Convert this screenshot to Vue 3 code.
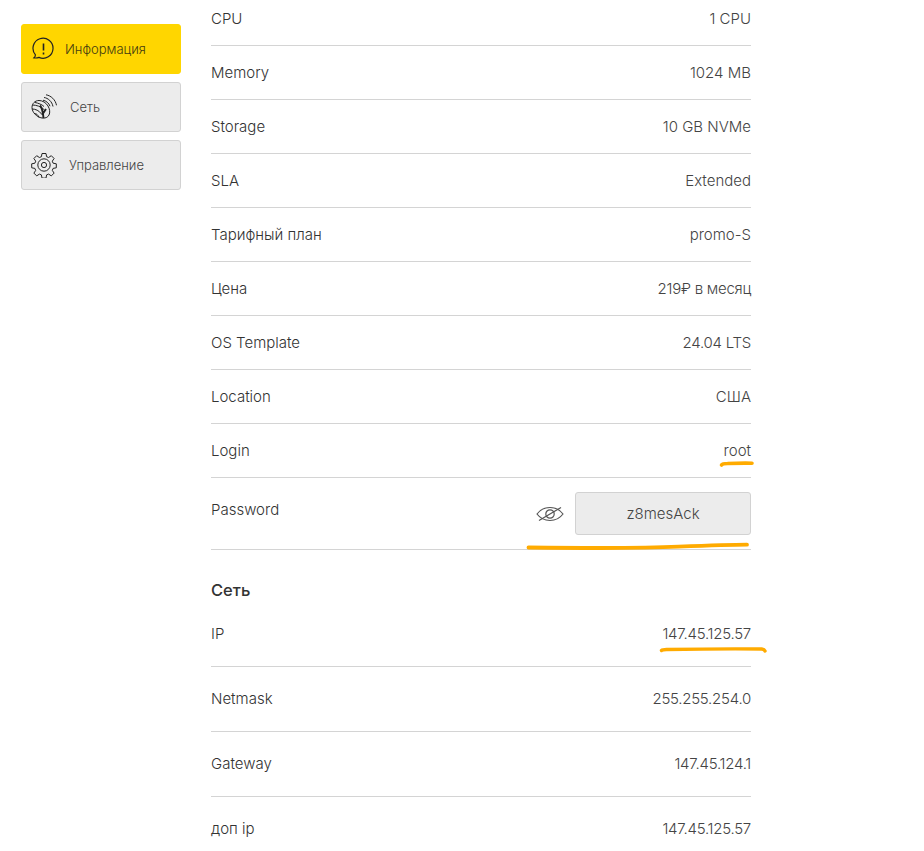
<script setup>
const specs = [
  ['CPU', '1 CPU', ''],
  ['Memory', '1024 MB', ''],
  ['Storage', '10 GB NVMe', ''],
  ['SLA', 'Extended', ''],
  ['Тарифный план', 'promo-S', ''],
  ['Цена', '219₽ в месяц', 'num'],
  ['OS Template', '24.04 LTS', 'num'],
  ['Location', 'США', ''],
  ['Login', 'root', ''],
]
const network = [
  ['IP', '147.45.125.57'],
  ['Netmask', '255.255.254.0'],
  ['Gateway', '147.45.124.1'],
  ['доп ip', '147.45.125.57'],
]
</script>

<template>
  <div class="page">
    <aside class="side">
      <div class="tab active">
        <svg class="ico info" width="24" height="24" viewBox="0 0 24 24" fill="none" stroke="#222" stroke-width="1.2">
          <path d="M3 20.800c1-.9 1.500-2 1.300-3.200A10 10 0 1 1 8 20.400c-1.500.5-3.200.8-5 .4z" />
          <path d="M12.500 6.500v7M12.500 15.500v2" stroke-width="1.600" />
        </svg>
        <span class="t1">Информация</span>
      </div>
      <div class="tab">
        <svg class="ico net" width="26" height="26" viewBox="0 0 26 26" fill="none" stroke="#222" stroke-width="1">
          <path d="M1 13.500c0-4 3-7 7-7 3.500 0 7 2.200 9 5.500 1.800 3 2.300 6.500 1 9-1.200 2.500-4 3.500-7 3C6 23.200 1 18.500 1 13.500z" />
          <path d="M1.500 11c3.500 0 9 1.500 12 5M1 15c3.500 0 7 1.500 9.500 5M3 19.500c2.500 0 4 1.200 5 4M4 8.500c3 .5 7 2 9 4" />
          <path d="M9 11.500c2.500 2.500 3 7 3.500 12.500M15 15l-4 6" stroke-width="1.900" />
          <path d="M13 3.500c4 .5 8 4 9 9M15 .8c5 .8 9.500 5 10.500 10.500M12 6.200c3 .5 6 3 7 6" />
        </svg>
        <span class="t2">Сеть</span>
      </div>
      <div class="tab">
        <svg class="ico gear" width="26" height="26" viewBox="0 0 26 26" fill="none" stroke="#222" stroke-width="1">
          <path d="M11 1.500h4l.6 3.200 2 .8 2.700-1.800 2.800 2.800-1.800 2.700.8 2 3.200.6v4l-3.200.6-.8 2 1.800 2.700-2.800 2.800-2.700-1.800-2 .8-.6 3.200h-4l-.6-3.200-2-.8-2.700 1.800-2.800-2.800 1.800-2.700-.8-2-3.200-.6v-4l3.200-.6.8-2-1.800-2.700 2.800-2.800 2.700 1.800 2-.8z" />
          <circle cx="13" cy="13" r="6.200" />
          <circle cx="13" cy="13" r="2.600" />
        </svg>
        <span class="t3">Управление</span>
      </div>
    </aside>

    <main class="main">
      <div v-for="row in specs" :key="row[0]" class="row">
        <span>{{ row[0] }}</span>
        <span class="val" :class="row[2]">{{ row[1] }}</span>
      </div>
      <div class="row pass">
        <span class="pass-label">Password</span>
        <div class="pass-right">
          <svg width="30" height="20" viewBox="0 0 30 20" fill="none" stroke="#555" stroke-width="1.200">
            <path d="M2 10c3-4 7.500-6.500 13-6.500S25 6 28 10c-3 4-7.500 6.500-13 6.500S5 14 2 10z" />
            <circle cx="15" cy="10" r="4.200" />
            <path d="M4 16.500 26 3.500" />
          </svg>
          <div class="pass-btn">z8mesAck</div>
        </div>
      </div>
      <h3 class="heading">Сеть</h3>
      <div v-for="row in network" :key="row[0] + row[1]" class="row tall">
        <span>{{ row[0] }}</span>
        <span class="val num">{{ row[1] }}</span>
      </div>
    </main>

    <svg class="marks" width="924" height="851" viewBox="0 0 924 851" fill="none" stroke="#ffab00" stroke-linecap="round">
      <path d="M721.500 465c1-1.500 3-1.500 6-1.500 8-.3 16-.5 24.500-.3" stroke-width="3.600" />
      <path d="M528.500 547.500c50 .6 120 .6 150-.8 25-1 50-2 68.500-2" stroke-width="3.800" />
      <path d="M661.500 650.500c1-1 3-1 5-1 30-.5 65-.8 95-.5 2 .2 3 .8 3.500 2" stroke-width="3.400" />
    </svg>
  </div>
</template>

<style>
html, body {
  margin: 0;
  background: #fff;
}
</style>

<style scoped>
.page {
  position: relative;
  display: flex;
  align-items: flex-start;
  width: 924px;
  height: 851px;
  overflow: hidden;
  padding-left: 21px;
  box-sizing: border-box;
  background: #fff;
  font-family: "Inter", "Noto Sans", sans-serif;
  font-size: 15px;
  font-weight: 300;
  color: #333;
}
.side {
  display: flex;
  flex-direction: column;
  gap: 8px;
  width: 160px;
  margin-top: 24px;
  flex: none;
}
.tab {
  display: flex;
  align-items: center;
  height: 50px;
  box-sizing: border-box;
  border: 1px solid #d2d2d2;
  border-radius: 3px;
  background: #ececec;
  font-size: 13px;
  color: #444;
}
.tab.active {
  background: #ffd600;
  border-color: #ffd600;
  color: #443c10;
}
.ico {
  flex: none;
  margin-left: 9px;
}
.t1 { margin-left: 10px; }
.t2 { margin-left: 13px; }
.t3 { margin-left: 12px; }
.main {
  width: 540px;
  margin-left: 30px;
  margin-top: -8px;
  flex: none;
}
.row {
  display: flex;
  justify-content: space-between;
  align-items: center;
  height: 54px;
  box-sizing: border-box;
  border-bottom: 1px solid #d4d4d4;
}
.row.tall {
  height: 65px;
  padding-bottom: 2px;
}
.val {
  color: #444;
}
.val.num {
  letter-spacing: -0.25px;
}
.pass {
  height: 72px;
  align-items: flex-start;
  padding-top: 14px;
}
.pass-label {
  margin-top: 8px;
}
.pass-right {
  display: flex;
  align-items: center;
  gap: 10px;
}
.pass-btn {
  display: flex;
  align-items: center;
  justify-content: center;
  width: 176px;
  height: 43px;
  box-sizing: border-box;
  border: 1px solid #d2d2d2;
  border-radius: 3px;
  background: #ececec;
  color: #444;
}
.heading {
  margin: 0;
  height: 52px;
  padding-top: 31px;
  box-sizing: border-box;
  font-size: 16.500px;
  font-weight: 500;
  line-height: 19px;
  color: #333;
}
.marks {
  position: absolute;
  left: 0;
  top: 0;
  pointer-events: none;
}
</style>
